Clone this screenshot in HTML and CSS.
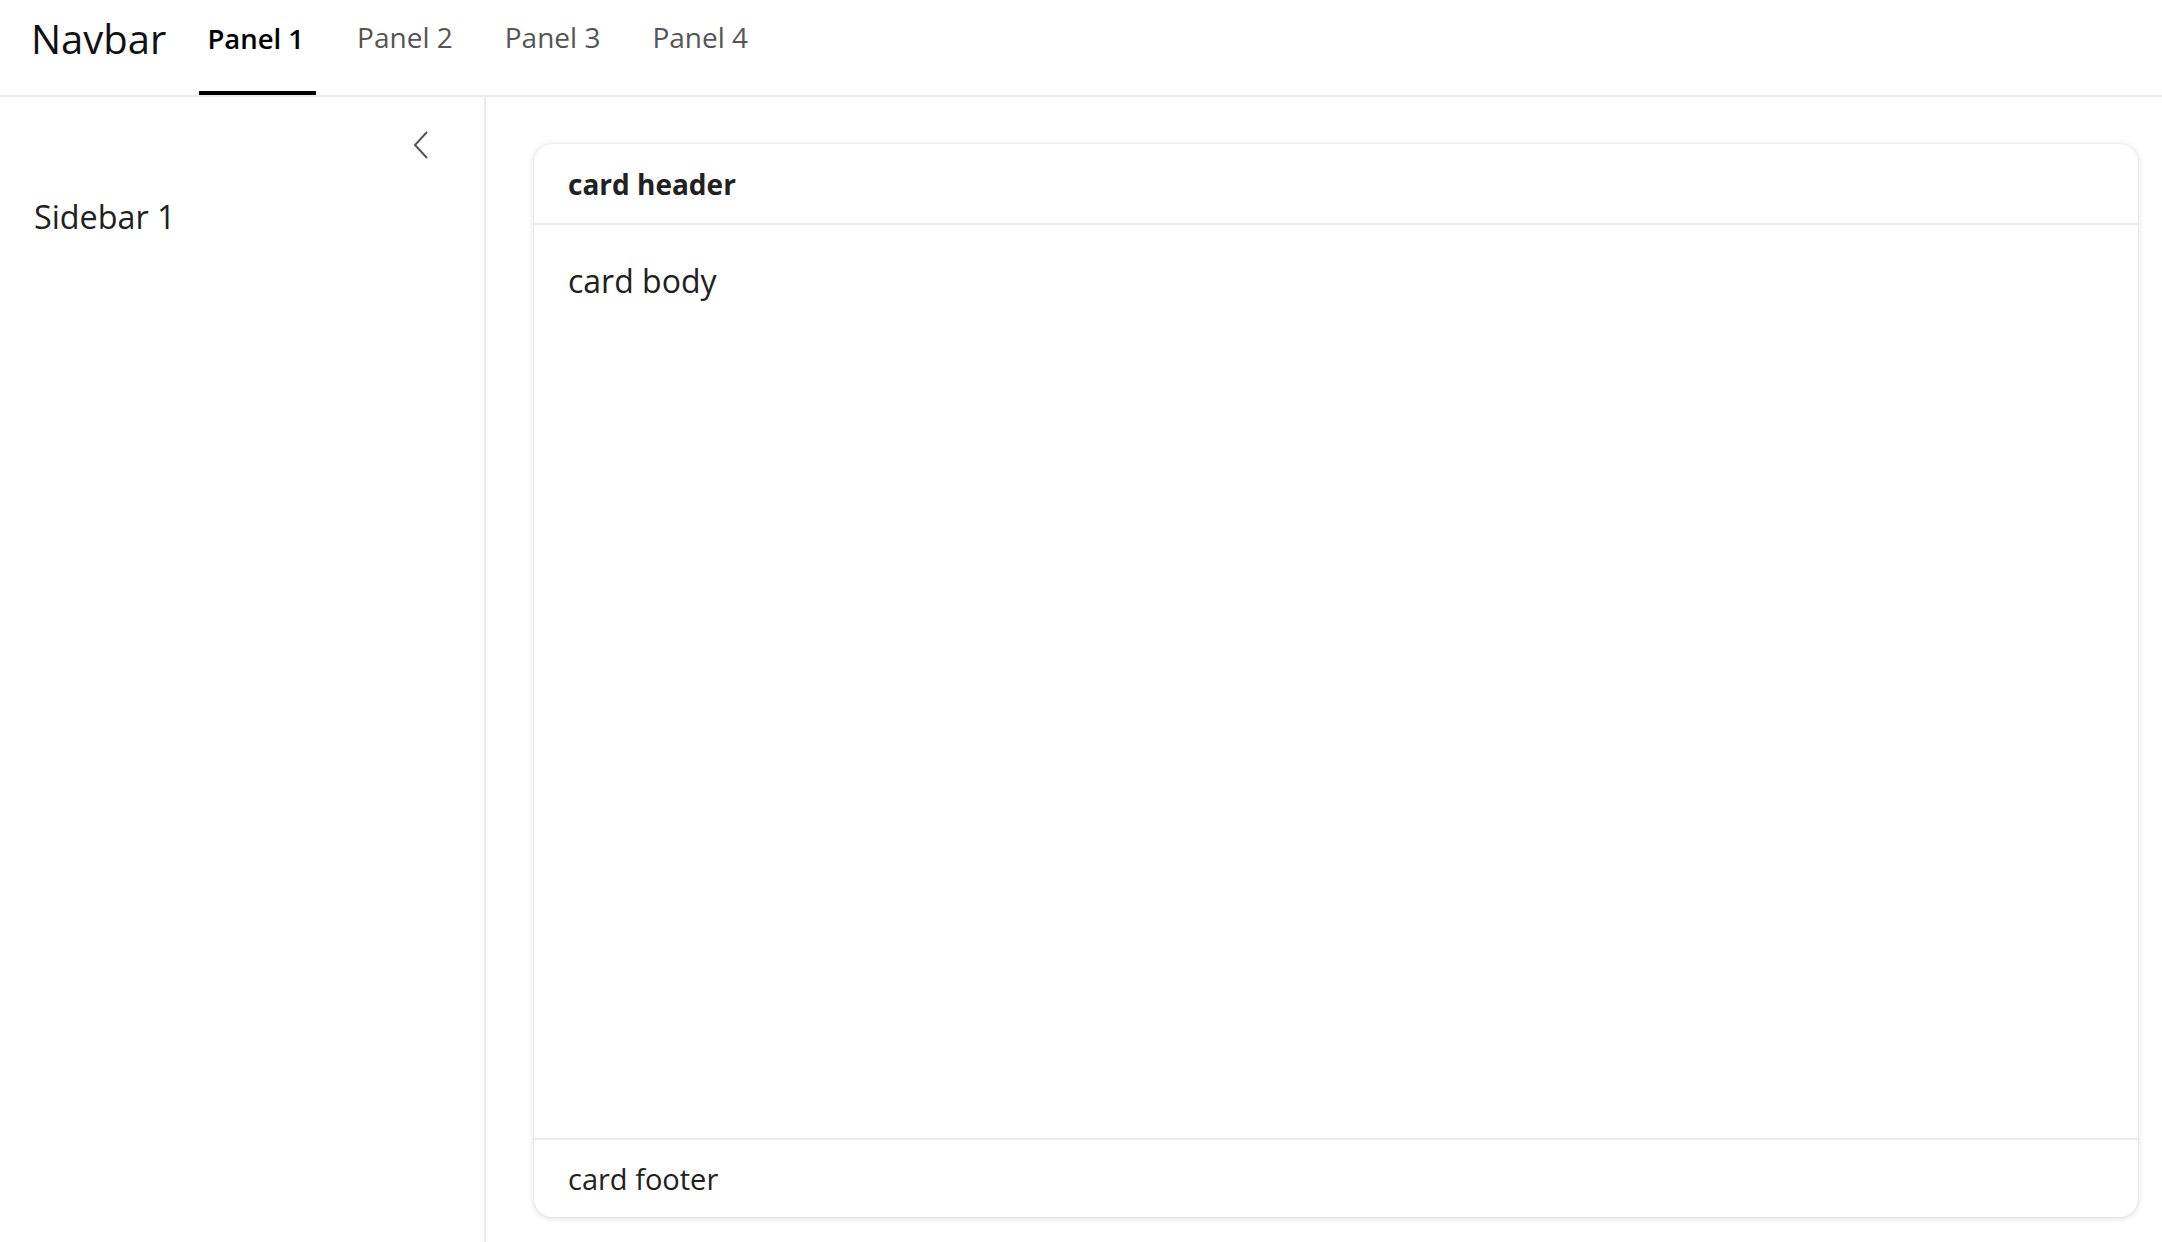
FILE: index.html
```html
<!DOCTYPE html>
<html>
<head>
<meta charset="utf-8">
<link rel="stylesheet" href="styles.css">
</head>
<body>
<header class="navbar">
  <div class="brand">Navbar</div>
  <nav class="tabs">
    <a class="tab active">Panel 1</a>
    <a class="tab">Panel 2</a>
    <a class="tab">Panel 3</a>
    <a class="tab">Panel 4</a>
  </nav>
</header>
<div class="main">
  <aside class="sidebar">
    <div class="sidebar-top">
      <svg class="chevron" width="16" height="28" viewBox="0 0 16 28"><path d="M14 1 L2 14 L14 27" fill="none" stroke="#555" stroke-width="2"/></svg>
    </div>
    <div class="sidebar-title">Sidebar 1</div>
  </aside>
  <section class="content">
    <div class="card">
      <div class="card-header">card header</div>
      <div class="card-body">card body</div>
      <div class="card-footer">card footer</div>
    </div>
  </section>
</div>
</body>
</html>
```
FILE: styles.css
```css
html, body { margin: 0; padding: 0; height: 100%; }
body {
  font-family: "Open Sans", sans-serif;
  color: #212121;
  background: #fff;
  display: flex;
  flex-direction: column;
  height: 1242px;
  overflow: hidden;
}
.navbar {
  height: 95px;
  border-bottom: 2px solid #ebebeb;
  display: flex;
  align-items: stretch;
  padding-left: 31px;
  flex-shrink: 0;
  box-sizing: content-box;
}
.brand {
  font-size: 40px;
  color: #111;
  display: flex;
  align-items: center;
  padding-bottom: 18px;
  margin-right: 33px;
}
.tabs { display: flex; gap: 30px; }
.tab {
  font-size: 28px;
  color: #555;
  padding: 0 11px 18px;
  display: flex;
  align-items: center;
  border-bottom: 4px solid transparent;
  box-sizing: border-box;
}
.tab.active {
  color: #000;
  font-weight: 600;
  font-size: 27.5px;
  border-bottom-color: #000;
  padding: 0 12px 14px 8px;
}
.main { flex: 1; display: flex; min-height: 0; }
.sidebar {
  width: 484px;
  border-right: 2px solid #ebebeb;
  flex-shrink: 0;
  padding-top: 34px;
}
.sidebar-top { display: flex; justify-content: flex-end; padding-right: 55px; }
.chevron { display: block; }
.sidebar-title { font-size: 32.3px; padding-left: 34px; margin-top: 35px; }
.content {
  flex: 1;
  padding: 47px 24px 25px 48px;
  display: flex;
  min-width: 0;
}
.card {
  flex: 1;
  display: flex;
  flex-direction: column;
  border-radius: 18px;
  background: #fff;
  box-shadow: 0 1px 6px rgba(0,0,0,0.16), 0 0 1px rgba(0,0,0,0.1);
}
.card-header {
  font-size: 28px;
  font-weight: 700;
  padding: 0 34px;
  height: 79px;
  display: flex;
  align-items: center;
  border-bottom: 2px solid #ebebeb;
}
.card-body {
  flex: 1;
  font-size: 32px;
  padding: 34px 34px 20px;
}
.card-footer {
  font-size: 29px;
  padding: 0 34px;
  height: 77px;
  display: flex;
  align-items: center;
  border-top: 2px solid #ebebeb;
}
```
